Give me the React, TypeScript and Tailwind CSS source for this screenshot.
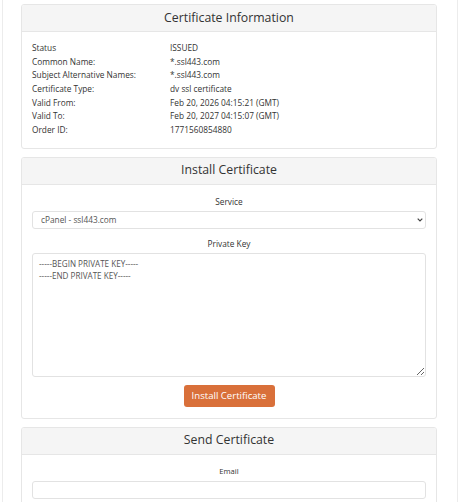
import React from "react";

const rows: [string, string][] = [
    ["Status", "ISSUED"],
    ["Common Name:", "*.ssl443.com"],
    ["Subject Alternative Names:", "*.ssl443.com"],
    ["Certificate Type:", "dv ssl certificate"],
    ["Valid From:", "Feb 20, 2026 04:15:21 (GMT)"],
    ["Valid To:", "Feb 20, 2027 04:15:07 (GMT)"],
    ["Order ID:", "1771560854880"],
];

const CardHeader = ({title}: {title: string}) => (
    <div className="h-[27px] bg-[#f5f5f5] border-b border-[#e6e6e6] flex items-center justify-center text-[12.3px] text-[#333]">
        {title}
    </div>
);

const App = () => {
    return (
        <div className="bg-white font-['Open_Sans',sans-serif] text-[#333]">
            <div className="ml-[2px] w-[456px] min-h-[502px] border-x border-[#ececec] pl-[18px] pt-[4px] flex flex-col gap-[8px]">
                <div className="w-[416px] border border-[#e6e6e6] rounded-[3px] overflow-hidden">
                    <CardHeader title="Certificate Information"/>
                    <div className="px-[10px] pt-[9px] pb-[11px] text-[8.3px] leading-[13.67px]">
                        {rows.map(([label, value]) => (
                            <div key={label} className="flex">
                                <div className="w-[138px]">{label}</div>
                                <div>{value}</div>
                            </div>
                        ))}
                    </div>
                </div>

                <div className="w-[416px] border border-[#e6e6e6] rounded-[3px] overflow-hidden">
                    <CardHeader title="Install Certificate"/>
                    <div className="px-[10px] pt-[11px] pb-[11px] flex flex-col">
                        <label className="text-center text-[8.3px] leading-[12px] mb-[3px]">Service</label>
                        <div className="relative h-[18px]">
                            <select
                                defaultValue="cpanel"
                                className="block appearance-none h-[18px] w-full border border-[#e2e2e2] rounded-[3px] bg-white text-[8.3px] leading-[16px] text-[#555] pl-[8px] pr-[16px] outline-none">
                                <option value="cpanel">cPanel - ssl443.com</option>
                            </select>
                            <svg className="absolute right-[3px] top-[7px] pointer-events-none" width="6" height="4" viewBox="0 0 6 4">
                                <path d="M0.7 0.7 L3 3 L5.3 0.7" fill="none" stroke="#444" strokeWidth="1.2"/>
                            </svg>
                        </div>
                        <label className="text-center text-[8.3px] leading-[12px] mt-[9px] mb-[3px]">Private Key</label>
                        <textarea
                            defaultValue={"-----BEGIN PRIVATE KEY-----\n-----END PRIVATE KEY-----"}
                            className="block h-[124px] w-full border border-[#e2e2e2] rounded-[3px] bg-white text-[8.1px] leading-[12px] text-[#555] px-[6px] py-[4px] outline-none"/>
                        <div className="flex justify-center mt-[8px]">
                            <button className="h-[22px] w-[91px] rounded-[3px] bg-[#d9703a] text-white text-[9.6px]">
                                Install Certificate
                            </button>
                        </div>
                    </div>
                </div>

                <div className="w-[416px] border border-[#e6e6e6] rounded-[3px] overflow-hidden">
                    <CardHeader title="Send Certificate"/>
                    <div className="px-[10px] pt-[11px] pb-[11px] flex flex-col">
                        <label className="text-center text-[7.6px] leading-[11px] mb-[4px]">Email</label>
                        <input className="block h-[18px] w-full border border-[#e2e2e2] rounded-[3px] bg-white text-[8.3px] px-[6px] outline-none"/>
                    </div>
                </div>
            </div>
        </div>
    );
};

export default App;
